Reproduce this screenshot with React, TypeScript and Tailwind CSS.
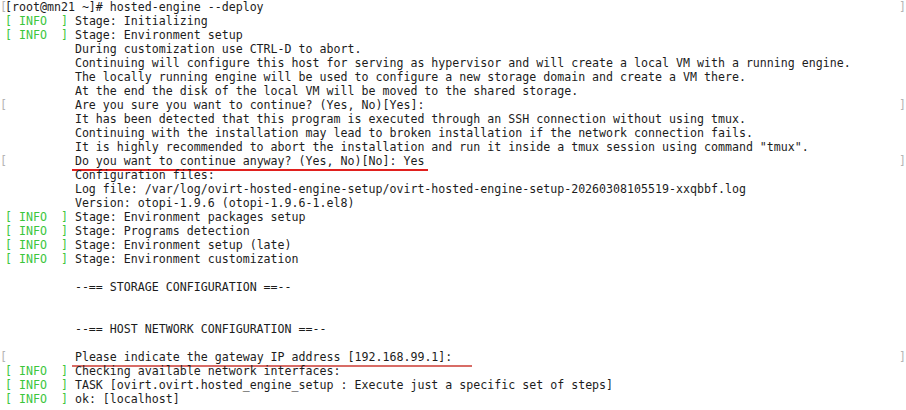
import React from "react";

type Line = { t: string; info?: boolean; edge?: boolean; ul?: "a" | "b" };

const lines: Line[] = [
  { t: "[root@mn21 ~]# hosted-engine --deploy", edge: true },
  { t: "Stage: Initializing", info: true },
  { t: "Stage: Environment setup", info: true },
  { t: "          During customization use CTRL-D to abort." },
  { t: "          Continuing will configure this host for serving as hypervisor and will create a local VM with a running engine." },
  { t: "          The locally running engine will be used to configure a new storage domain and create a VM there." },
  { t: "          At the end the disk of the local VM will be moved to the shared storage." },
  { t: "          Are you sure you want to continue? (Yes, No)[Yes]:", edge: true },
  { t: "          It has been detected that this program is executed through an SSH connection without using tmux." },
  { t: "          Continuing with the installation may lead to broken installation if the network connection fails." },
  { t: "          It is highly recommended to abort the installation and run it inside a tmux session using command \"tmux\"." },
  { t: "Do you want to continue anyway? (Yes, No)[No]: Yes", edge: true, ul: "a" },
  { t: "          Configuration files:" },
  { t: "          Log file: /var/log/ovirt-hosted-engine-setup/ovirt-hosted-engine-setup-20260308105519-xxqbbf.log" },
  { t: "          Version: otopi-1.9.6 (otopi-1.9.6-1.el8)" },
  { t: "Stage: Environment packages setup", info: true },
  { t: "Stage: Programs detection", info: true },
  { t: "Stage: Environment setup (late)", info: true },
  { t: "Stage: Environment customization", info: true },
  { t: " " },
  { t: "          --== STORAGE CONFIGURATION ==--" },
  { t: " " },
  { t: " " },
  { t: "          --== HOST NETWORK CONFIGURATION ==--" },
  { t: " " },
  { t: "Please indicate the gateway IP address [192.168.99.1]:", edge: true, ul: "b" },
  { t: "Checking available network interfaces:", info: true },
  { t: "TASK [ovirt.ovirt.hosted_engine_setup : Execute just a specific set of steps]", info: true },
  { t: "ok: [localhost]", info: true },
];

export default function App() {
  return (
    <div
      className="w-[906px] h-[410px] overflow-hidden bg-white text-[#1c1c1c] pl-[5px]"
      style={{ fontFamily: '"DejaVu Sans Mono", "Liberation Mono", monospace' }}
    >
      <div className="flex flex-col text-[11.62px] leading-[14px] whitespace-pre">
        {lines.map((l, i) => (
          <div key={i} className="relative h-[14px]">
            {l.edge && (
              <>
                <span className="absolute left-[-5px] top-0 text-[#b4b4b4]">[</span>
                <span className="absolute left-[894px] top-0 text-[#b4b4b4]">]</span>
              </>
            )}
            {l.info ? (
              <>
                <span className="text-[#3cc63c]">[ INFO  ]</span>
                <span> {l.t}</span>
              </>
            ) : l.ul ? (
              <>
                <span>{"          "}</span>
                <span className="relative">
                  {l.t}
                  <span
                    className={
                      l.ul === "a"
                        ? "absolute left-[-3px] right-[-4px] top-[15px] h-[2px] bg-[#e0201e]"
                        : "absolute left-[-3px] right-[-20px] top-[15px] h-[2px] bg-[#d86c66]"
                    }
                  />
                </span>
              </>
            ) : (
              <span>{l.t}</span>
            )}
          </div>
        ))}
      </div>
    </div>
  );
}
